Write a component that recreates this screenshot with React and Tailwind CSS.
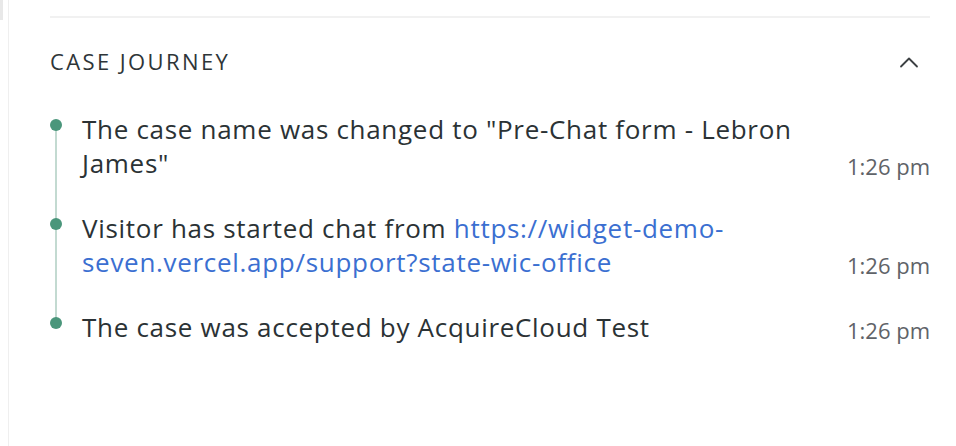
import React from 'react';

const events = [
  { text: 'The case name was changed to "Pre-Chat form - Lebron James"', time: '1:26 pm' },
  {
    text: 'Visitor has started chat from ',
    link: 'https://widget-demo-seven.vercel.app/support?state-wic-office',
    time: '1:26 pm',
  },
  { text: 'The case was accepted by AcquireCloud Test', time: '1:26 pm' },
];

const ChevronUp = () => (
  <svg width="20" height="12" viewBox="0 0 20 12" fill="none">
    <path d="M2 10.5L10 2.5L18 10.5" stroke="#3c4043" strokeWidth="1.8" strokeLinecap="round" strokeLinejoin="round" />
  </svg>
);

const App = () => {
  return (
    <div className="w-[956px] h-[446px] bg-white flex overflow-hidden" style={{ fontFamily: '"Open Sans", "Noto Sans", sans-serif' }}>
      <div className="w-[8px] shrink-0">
        <div className="w-[3px] h-[20px] bg-[#e8e8e8]" />
      </div>
      <div className="flex-1 border-l border-[#efefef] pl-[41px] pr-[26px]">
        <div className="mt-[16px] h-[2px] bg-[#f1f1f1]" />

        <div className="flex items-center justify-between mt-[28px]">
          <h2 className="text-[22px] leading-[30px] text-[#2e3538] tracking-[2.4px]">CASE JOURNEY</h2>
          <div className="mr-[11px] mt-[2px]">
            <ChevronUp />
          </div>
        </div>

        <div className="relative mt-[36px]">
          <div className="absolute left-[5px] top-[12px] bottom-[22px] w-[2px] bg-[#c3dad1]" />
          <ul className="flex flex-col gap-[31px]">
            {events.map((ev, i) => (
              <li key={i} className="flex items-end">
                <div className="flex flex-1">
                  <div className="w-[12px] h-[12px] rounded-full bg-[#4a967b] mt-[7px] shrink-0 relative" />
                  <p className="ml-[20px] text-[26px] leading-[34px] text-[#2b3235] tracking-[0.7px] max-w-[735px]">
                    {ev.text}
                    {ev.link && <span className="text-[#3b6fd1]">{ev.link}</span>}
                  </p>
                </div>
                <span className="ml-[20px] mb-[-3px] text-[22px] leading-[34px] text-[#5f6368] whitespace-nowrap">{ev.time}</span>
              </li>
            ))}
          </ul>
        </div>
      </div>
    </div>
  );
};

export default App;
